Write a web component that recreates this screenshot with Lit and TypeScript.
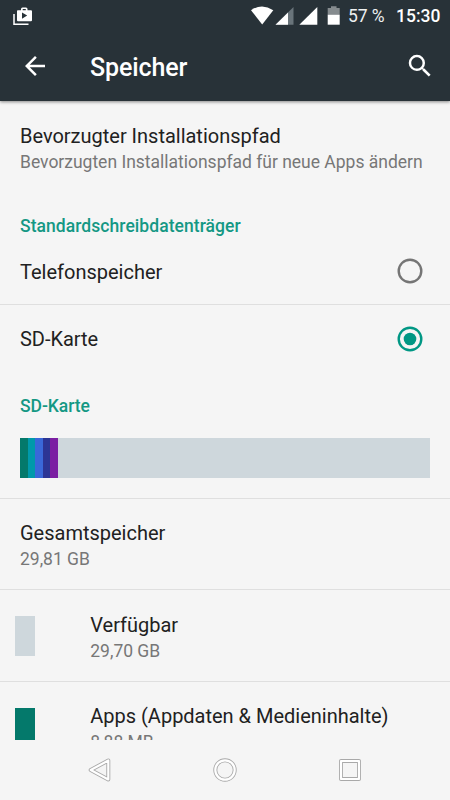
import { LitElement, html, css, svg } from "lit";
import { customElement, property } from "lit/decorators.js";
import { styleMap } from "lit/directives/style-map.js";

const segments = ["#04796b", "#0099ab", "#3a68d9", "#2c3595", "#7b1fa2"];

@customElement("storage-row")
class StorageRow extends LitElement {
  @property() label = "";
  @property() summary = "";
  @property() swatch = "";

  static styles = css`
    :host { display: flex; height: 91.5px; box-sizing: border-box; flex: none; }
    .swatch { width: 20px; height: 40px; margin: 26px 55px 0 15.3px; flex: none; }
    .text { padding-top: 21.7px; white-space: nowrap; }
    .text.inset { padding-left: 20px; }
    .label { font-size: 20px; line-height: 26px; color: #212121; letter-spacing: -0.01px; }
    .summary { font-size: 17.5px; line-height: 26px; color: #777; letter-spacing: -0.01px; }
  `;

  render() {
    return html`
      ${this.swatch
        ? html`<div class="swatch" style=${styleMap({ background: this.swatch })}></div>`
        : ""}
      <div class="text ${this.swatch ? "" : "inset"}">
        <div class="label">${this.label}</div>
        <div class="summary">${this.summary}</div>
      </div>
    `;
  }
}

@customElement("app-root")
class AppRoot extends LitElement {
  static styles = css`
    :host {
      display: flex; flex-direction: column; width: 450px; height: 800px;
      overflow: hidden; background: #f5f5f5; color: #212121;
      font-family: Roboto, "Liberation Sans", sans-serif;
    }
    svg { display: block; flex: none; }
    .top { flex: none; height: 101px; background: #283238; color: #fff; box-shadow: 0 1px 3px rgba(0,0,0,.45); z-index: 1; }
    .status { display: flex; height: 32px; align-items: center; font-size: 17.5px; }
    .bag { margin-left: 13px; }
    .signals { margin-left: auto; }
    .percent { width: 48px; margin-left: 7px; color: #eef0f0; white-space: nowrap; letter-spacing: -0.1px; }
    .clock { font-weight: 500; width: 54px; white-space: nowrap; }
    .toolbar { display: flex; height: 69px; align-items: center; }
    .back { margin-left: 20px; margin-top: -1px; }
    .title { margin: 1px 0 0 40px; font-size: 25px; font-weight: 500; flex: 1; letter-spacing: -0.1px; }
    .search { margin-right: 15px; margin-top: -1px; }
    main { flex: 1; min-height: 0; overflow: hidden; display: flex; flex-direction: column; }
    .line { border-top: 1px solid #dfdfdf; }
    .heading { height: 45px; padding: 20px 20px 0; box-sizing: border-box; flex: none; font-size: 17.5px; line-height: 26px; font-weight: 500; color: #149884; letter-spacing: 0.06px; }
    .heading.card { height: 65px; letter-spacing: -0.05px; }
    .choice { display: flex; align-items: center; justify-content: space-between; box-sizing: border-box; flex: none; height: 66px; padding: 0 25px 0 20px; font-size: 20px; }
    .choice span { padding-top: 3px; }
    .choice.line { height: 69px; }
    .choice.line span { padding-top: 1px; letter-spacing: -0.05px; }
    .bar { display: flex; flex: none; height: 40px; margin: 0 20px 20px; background: #ced7dc; }
    .segment { width: 7.5px; }
    nav { height: 60px; flex: none; display: flex; justify-content: center; align-items: center; gap: 97px; }
  `;

  private radio(on: boolean) {
    const color = on ? "#009784" : "#757575";
    return html`<svg width="30" height="30" viewBox="0 0 30 30">
      <circle cx="15" cy="15" r="11.3" fill="none" stroke=${color} stroke-width="2.4" />
      ${on ? svg`<circle cx="15" cy="15" r="6.3" fill=${color} />` : ""}
    </svg>`;
  }

  render() {
    return html`
      <header class="top">
        <div class="status">
          <svg class="bag" width="20" height="32" viewBox="0 0 20 32">
            <path d="M1 14V24.2H15.5" fill="none" stroke="#fff" stroke-width="1.5" />
            <path fill="#fff" fill-rule="evenodd" d="M4.8 10.3H8V9Q8 7.5 9.5 7.5H13Q14.5 7.5 14.5 9V10.3H18Q19 10.3 19 11.3V20.2Q19 21.2 18 21.2H5Q4 21.2 4 20.2V11.1Q4 10.3 4.8 10.3ZM9.7 9V10.3H12.8V9ZM9 12.4V18.7L14.2 15.5Z" />
          </svg>
          <svg class="signals" width="90" height="32" viewBox="251 0 90 32">
            <path d="M251 10.2Q262 2.8 273.3 10.2L262.2 24.5Z" fill="#fff" />
            <path d="M275.5 24.7L293.5 7V24.7Z" fill="#69747a" />
            <path d="M275.5 24.7L288 12.4V24.7Z" fill="#fff" />
            <path d="M299.3 24.7L317.3 7V24.7Z" fill="#fff" />
            <path d="M331 6.2H336.5V8H339.7V15H327.7V8H331Z" fill="#858b8e" />
            <path d="M327.7 14.8H339.7V24.7H327.7Z" fill="#fff" />
          </svg>
          <span class="percent">57 %</span>
          <span class="clock">15:30</span>
        </div>
        <div class="toolbar">
          <svg class="back" width="30" height="30" viewBox="0 0 24 24">
            <path fill="#fff" d="M20 11H7.83l5.59-5.59L12 4l-8 8 8 8 1.41-1.41L7.83 13H20v-2z" />
          </svg>
          <h1 class="title">Speicher</h1>
          <svg class="search" width="30" height="30" viewBox="0 0 24 24">
            <path fill="#fff" d="M15.5 14h-.79l-.28-.27A6.47 6.47 0 0 0 16 9.5 6.5 6.5 0 1 0 9.5 16c1.61 0 3.09-.59 4.23-1.57l.27.28v.79l5 4.99L20.49 19l-4.99-5zm-6 0C7.01 14 5 11.99 5 9.5S7.01 5 9.5 5 14 7.01 14 9.5 11.99 14 9.5 14z" />
          </svg>
        </div>
      </header>
      <main>
        <storage-row label="Bevorzugter Installationspfad" summary="Bevorzugten Installationspfad für neue Apps ändern"></storage-row>
        <div class="heading">Standardschreibdatenträger</div>
        <div class="choice"><span>Telefonspeicher</span>${this.radio(false)}</div>
        <div class="choice line"><span>SD-Karte</span>${this.radio(true)}</div>
        <div class="heading card">SD-Karte</div>
        <div class="bar">
          ${segments.map((c) => html`<div class="segment" style=${styleMap({ background: c })}></div>`)}
        </div>
        <storage-row class="line" label="Gesamtspeicher" summary="29,81 GB"></storage-row>
        <storage-row class="line" label="Verfügbar" summary="29,70 GB" swatch="#ced7dc"></storage-row>
        <storage-row class="line" label="Apps (Appdaten &amp; Medieninhalte)" summary="8,88 MB" swatch="#04796b"></storage-row>
      </main>
      <nav>
        <svg width="28" height="28" viewBox="0 0 28 28" fill="none" stroke-linejoin="round">
          <path d="M4.7 14L22.3 4.5V23.5Z" stroke="#a9a9a9" stroke-width="4" />
          <path d="M4.7 14L22.3 4.5V23.5Z" stroke="#fff" stroke-width="2.2" />
        </svg>
        <svg width="28" height="28" viewBox="0 0 28 28" fill="none">
          <circle cx="14" cy="14" r="9.7" stroke="#a9a9a9" stroke-width="4" />
          <circle cx="14" cy="14" r="9.7" stroke="#fff" stroke-width="2.2" />
        </svg>
        <svg width="28" height="28" viewBox="0 0 28 28" fill="none" stroke-linejoin="round">
          <rect x="5" y="5" width="18" height="18" stroke="#a9a9a9" stroke-width="4" />
          <rect x="5" y="5" width="18" height="18" stroke="#fff" stroke-width="2.2" />
        </svg>
      </nav>
    `;
  }
}
